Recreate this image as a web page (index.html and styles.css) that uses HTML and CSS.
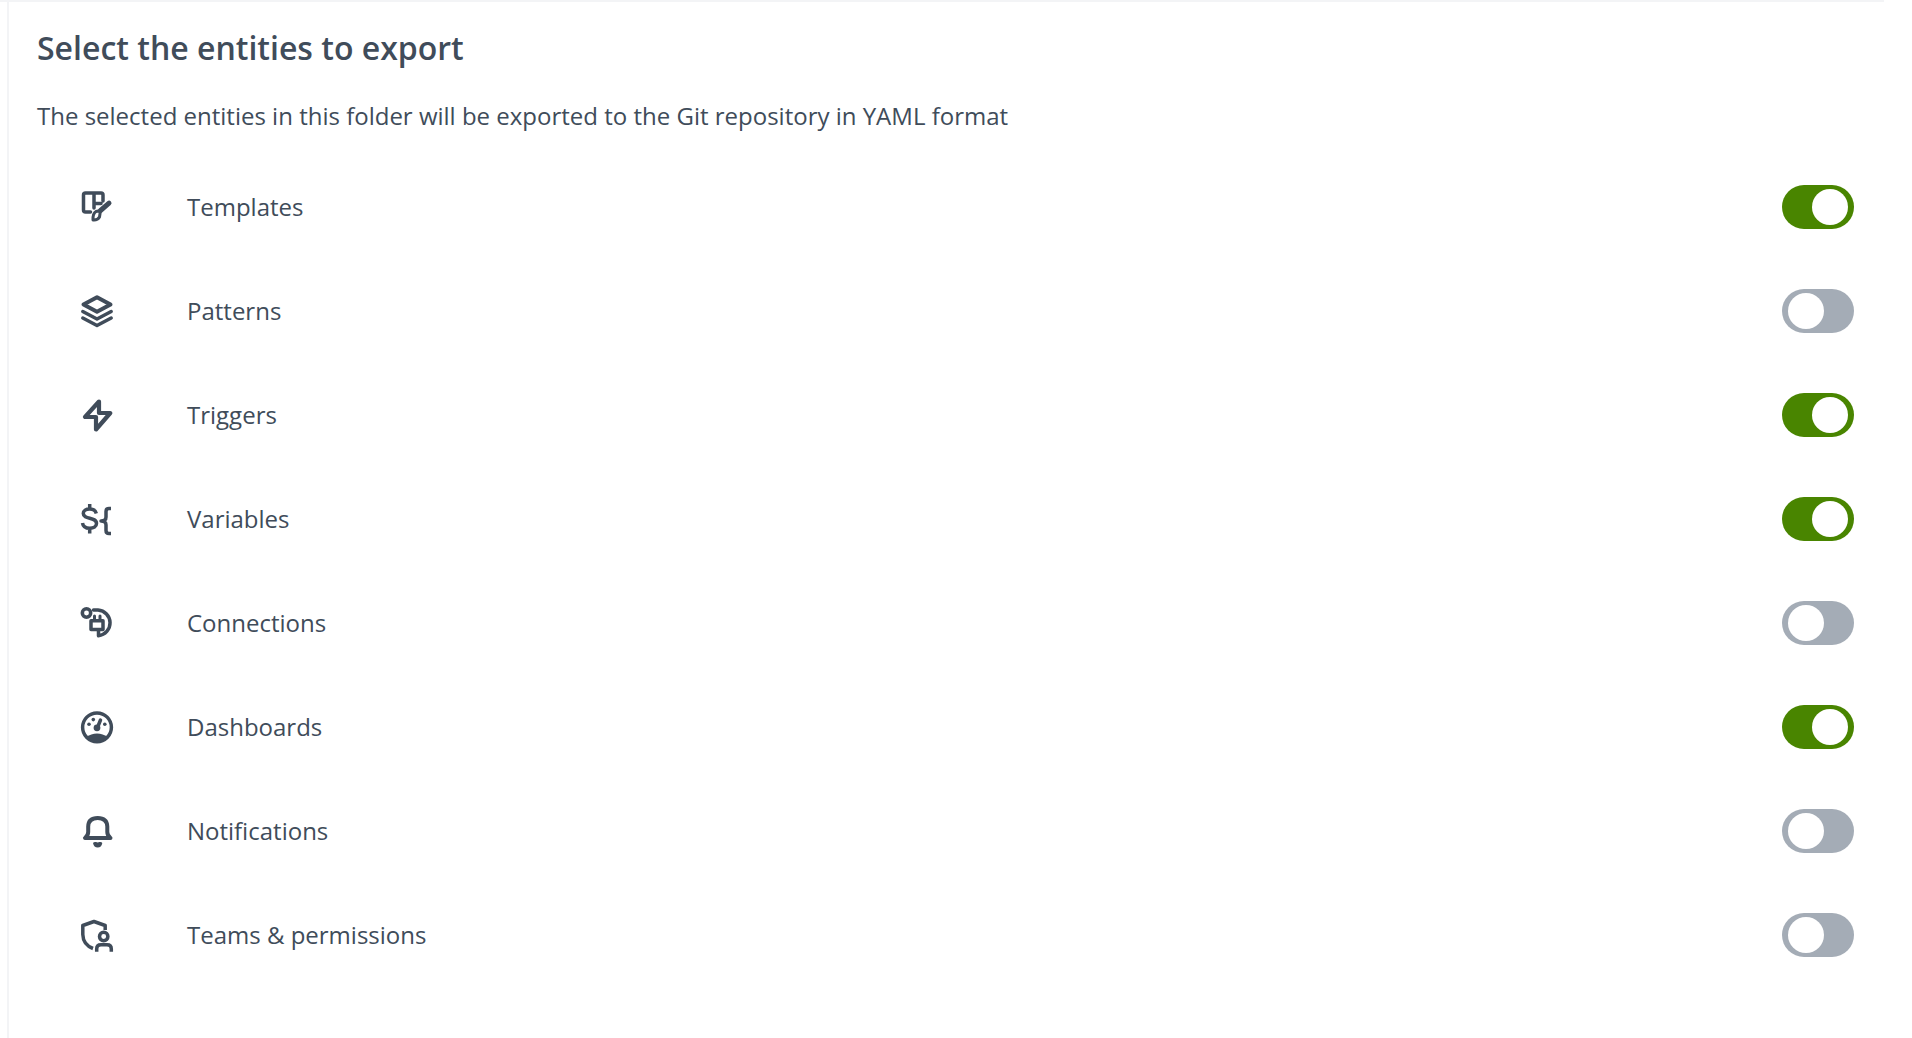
FILE: index.html
```html
<!DOCTYPE html>
<html lang="en">
<head>
<meta charset="utf-8">
<title>Select the entities to export</title>
<link rel="stylesheet" href="styles.css">
</head>
<body>
<main class="panel">
  <h1 class="title">Select the entities to export</h1>
  <p class="description">The selected entities in this folder will be exported to the Git repository in YAML format</p>
  <ul class="entities">
    <li class="entity">
      <svg class="icon" viewBox="0 0 32 32" aria-hidden="true"><path d="M9.500 21H4.500Q2.500 21 2.500 19V4Q2.500 2 4.500 2H20Q22 2 22 4V10M13 2V17M13 12.500H20"/><path d="M28 12.200L19.500 19.500" stroke-width="5"/><path d="M19.500 19.500L18.500 26Q16.500 29.500 12 29Q11.700 22.500 15 20.500Z" stroke-width="3"/></svg>
      <label class="name" for="templates">Templates</label>
      <input class="toggle" type="checkbox" role="switch" id="templates" checked>
    </li>
    <li class="entity">
      <svg class="icon" viewBox="0 0 32 32" aria-hidden="true"><path d="M16 2.200L29.500 9.500L16 16.800L2.500 9.500Z" stroke-width="4"/><path d="M1.800 16.500L16 24L30.200 16.500M1.800 23L16 30.500L30.200 23"/></svg>
      <label class="name" for="patterns">Patterns</label>
      <input class="toggle" type="checkbox" role="switch" id="patterns">
    </li>
    <li class="entity">
      <svg class="icon" viewBox="0 0 32 32" aria-hidden="true"><path d="M18 2.500L4 18H15V30.500L29.300 14H18Z" stroke-width="4.200"/></svg>
      <label class="name" for="triggers">Triggers</label>
      <input class="toggle" type="checkbox" role="switch" id="triggers" checked>
    </li>
    <li class="entity">
      <svg class="icon" viewBox="0 0 32 32" aria-hidden="true"><g stroke-linecap="butt"><path d="M15.300 10.500C14.500 7 12 6 8.700 6C5 6 2.300 7.500 2.300 10.500C2.300 17 15.500 13.500 15.500 20.500C15.500 23.700 12.500 25.300 8.700 25.300C4.500 25.300 2 23.500 1.500 20M8.700 1V6M8.700 25V30.500"/><path d="M30 5.500H28Q25 5.500 25 8.500V14Q25 18 20 18Q25 18 25 22V27.500Q25 30.500 28 30.500H30"/></g></svg>
      <label class="name" for="variables">Variables</label>
      <input class="toggle" type="checkbox" role="switch" id="variables" checked>
    </li>
    <li class="entity">
      <svg class="icon" viewBox="0 0 32 32" aria-hidden="true"><circle cx="5.500" cy="6" r="4.200"/><path d="M12.500 3H17A12.900 12.900 0 0 1 17.500 28.700V24"/><path d="M10 13.800H22V22.500H10Z"/><path d="M13.500 12V9M19 12V9" stroke-width="3"/></svg>
      <label class="name" for="connections">Connections</label>
      <input class="toggle" type="checkbox" role="switch" id="connections">
    </li>
    <li class="entity">
      <svg class="icon" viewBox="0 0 32 32" aria-hidden="true"><circle cx="16" cy="16.300" r="14.400"/><path d="M5.500 26Q10 22.500 16 22.500T26.500 26Q22 31 16 31T5.500 26Z" class="solid"/><path d="M19.500 9L16.300 17"/><circle class="solid" cx="16" cy="16.800" r="3.400"/><circle class="solid" cx="8" cy="13.300" r="1.800"/><circle class="solid" cx="12.300" cy="8.600" r="1.800"/><circle class="solid" cx="23.800" cy="13.300" r="1.800"/></svg>
      <label class="name" for="dashboards">Dashboards</label>
      <input class="toggle" type="checkbox" role="switch" id="dashboards" checked>
    </li>
    <li class="entity">
      <svg class="icon" viewBox="0 0 32 32" aria-hidden="true"><path d="M4 23H29.500Q26.300 20.500 26.300 17V11.500Q26 2.900 16.700 2.900T7.200 11.500V17Q7.200 20.500 4 23Z" stroke-width="4"/><path class="solid" d="M12 28Q13 26.500 15 27L16.700 27.600L18.400 27Q20.500 26.500 21.300 28Q20.500 32.500 16.700 32.500T12 28Z"/></svg>
      <label class="name" for="notifications">Notifications</label>
      <input class="toggle" type="checkbox" role="switch" id="notifications">
    </li>
    <li class="entity">
      <svg class="icon" viewBox="0 0 32 32" aria-hidden="true"><g stroke-linecap="butt"><path d="M24.200 11V6.500L13 2.500L1.800 6.500V15.500C2 22 5.500 27 12 29.500"/><circle cx="22.700" cy="17.500" r="4.200"/><path d="M15.700 32.700V30Q15.700 25.800 20 25.800H26Q30.300 25.800 30.300 30V32.700"/></g></svg>
      <label class="name" for="teams">Teams &amp; permissions</label>
      <input class="toggle" type="checkbox" role="switch" id="teams">
    </li>
  </ul>
</main>
</body>
</html>
```
FILE: styles.css
```css
* { box-sizing: border-box; }

body {
  margin: 0;
  background: #fff;
  color: #404c5a;
  font-family: "Open Sans", "Noto Sans", sans-serif;
  font-size: 24px;
  line-height: 32px;
}

.panel {
  min-height: 100vh;
  margin: 0 28px 0 7px;
  padding: 26px 30px 0 28px;
  border-left: 2px solid #f3f4f6;
  position: relative;
}

/* The top rule runs past the left edge of the panel. */
.panel::before {
  content: "";
  position: absolute;
  inset: 0 0 auto -9px;
  height: 2px;
  background: #f3f4f6;
}

.title {
  margin: 0 0 30px;
  font-size: 32px;
  line-height: 44px;
  font-weight: 600;
}

.description { margin: 0; }

.entities {
  margin: 23px 0 0;
  padding: 0;
  list-style: none;
}

.entity {
  display: flex;
  align-items: center;
  height: 104px;
  padding-left: 44px;
}

.icon {
  flex: none;
  width: 32px;
  height: 32px;
  overflow: visible;
  fill: none;
  stroke: #404c5a;
  stroke-width: 3.5;
  stroke-linecap: round;
  stroke-linejoin: round;
}

.solid {
  fill: #404c5a;
  stroke: none;
}

.name {
  flex: 1;
  margin-left: 74px;
}

.toggle {
  appearance: none;
  flex: none;
  width: 72px;
  height: 44px;
  margin: 0;
  padding: 4px 6px;
  border-radius: 22px;
  background: #a4acb6;
  cursor: pointer;
}

.toggle::before {
  content: "";
  display: block;
  width: 36px;
  height: 36px;
  border-radius: 50%;
  background: #fff;
}

.toggle:checked { background: #498500; }
.toggle:checked::before { margin-left: auto; }
```
